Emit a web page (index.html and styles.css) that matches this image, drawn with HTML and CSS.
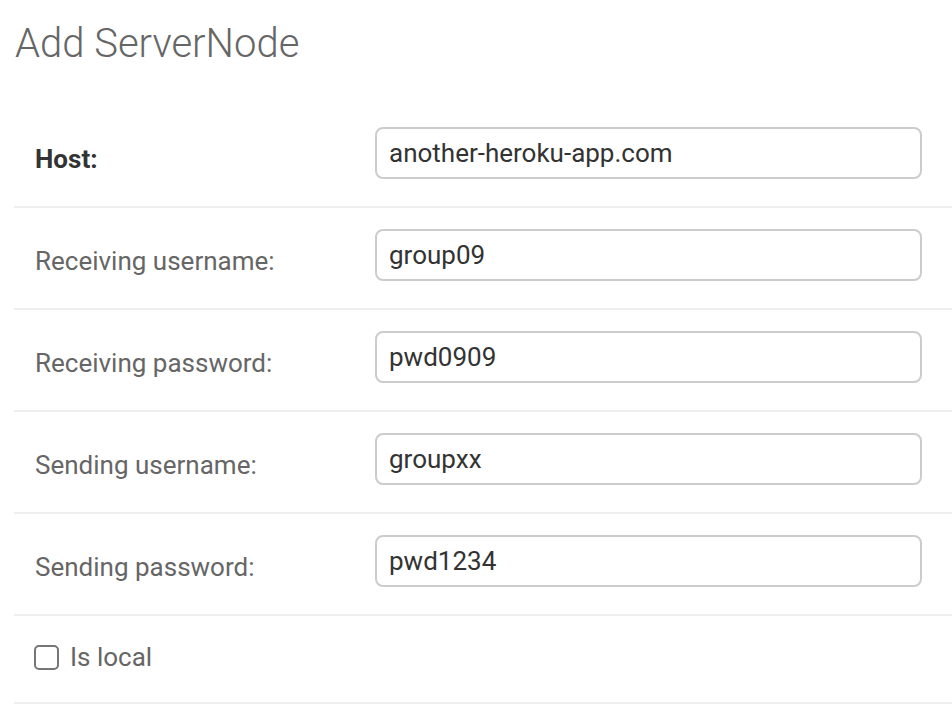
FILE: index.html
```html
<!DOCTYPE html>
<html>
<head>
<meta charset="utf-8">
<link rel="stylesheet" href="styles.css">
</head>
<body>
<div class="page">
  <h1 class="title">Add ServerNode</h1>
  <form class="form">
    <div class="row">
      <label class="label required">Host:</label>
      <input class="field" type="text" value="another-heroku-app.com">
    </div>
    <div class="row">
      <label class="label">Receiving username:</label>
      <input class="field" type="text" value="group09">
    </div>
    <div class="row">
      <label class="label">Receiving password:</label>
      <input class="field" type="text" value="pwd0909">
    </div>
    <div class="row">
      <label class="label">Sending username:</label>
      <input class="field" type="text" value="groupxx">
    </div>
    <div class="row">
      <label class="label">Sending password:</label>
      <input class="field" type="text" value="pwd1234">
    </div>
    <div class="row check-row">
      <input class="checkbox" type="checkbox">
      <label class="check-label">Is local</label>
    </div>
  </form>
</div>
</body>
</html>
```
FILE: styles.css
```css
html, body {
  margin: 0;
  padding: 0;
  background: #fff;
}
body {
  font-family: Roboto, "Liberation Sans", sans-serif;
  color: #333;
}
.page {
  padding: 0 0 0 14px;
}
.title {
  margin: 0;
  padding: 21px 0 0 1px;
  font-size: 40px;
  font-weight: 300;
  color: #666;
  line-height: 46px;
  height: 85px;
}
.form {
  display: flex;
  flex-direction: column;
}
.row {
  display: flex;
  align-items: flex-start;
  padding: 21px 0 27px 21px;
  border-bottom: 2px solid #eee;
}
.label {
  width: 340px;
  flex: none;
  font-size: 26px;
  line-height: 30px;
  color: #666;
  padding-top: 17px;
}
.label.required {
  font-weight: 700;
  color: #333;
}
.field {
  box-sizing: border-box;
  width: 547px;
  height: 52px;
  margin: 0;
  border: 2px solid #ccc;
  border-radius: 8px;
  padding: 0 12px;
  font-family: Roboto, "Liberation Sans", sans-serif;
  font-size: 26px;
  color: #333;
  background: #fff;
  outline: none;
}
.check-row {
  align-items: center;
  padding: 26px 0 30px 20px;
}
.checkbox {
  appearance: none;
  -webkit-appearance: none;
  width: 25px;
  height: 25px;
  margin: 0 11px 0 0;
  box-sizing: border-box;
  border: 2px solid #767676;
  border-radius: 5px;
  background: #fff;
}
.check-label {
  font-size: 26px;
  line-height: 30px;
  color: #666;
}
```
